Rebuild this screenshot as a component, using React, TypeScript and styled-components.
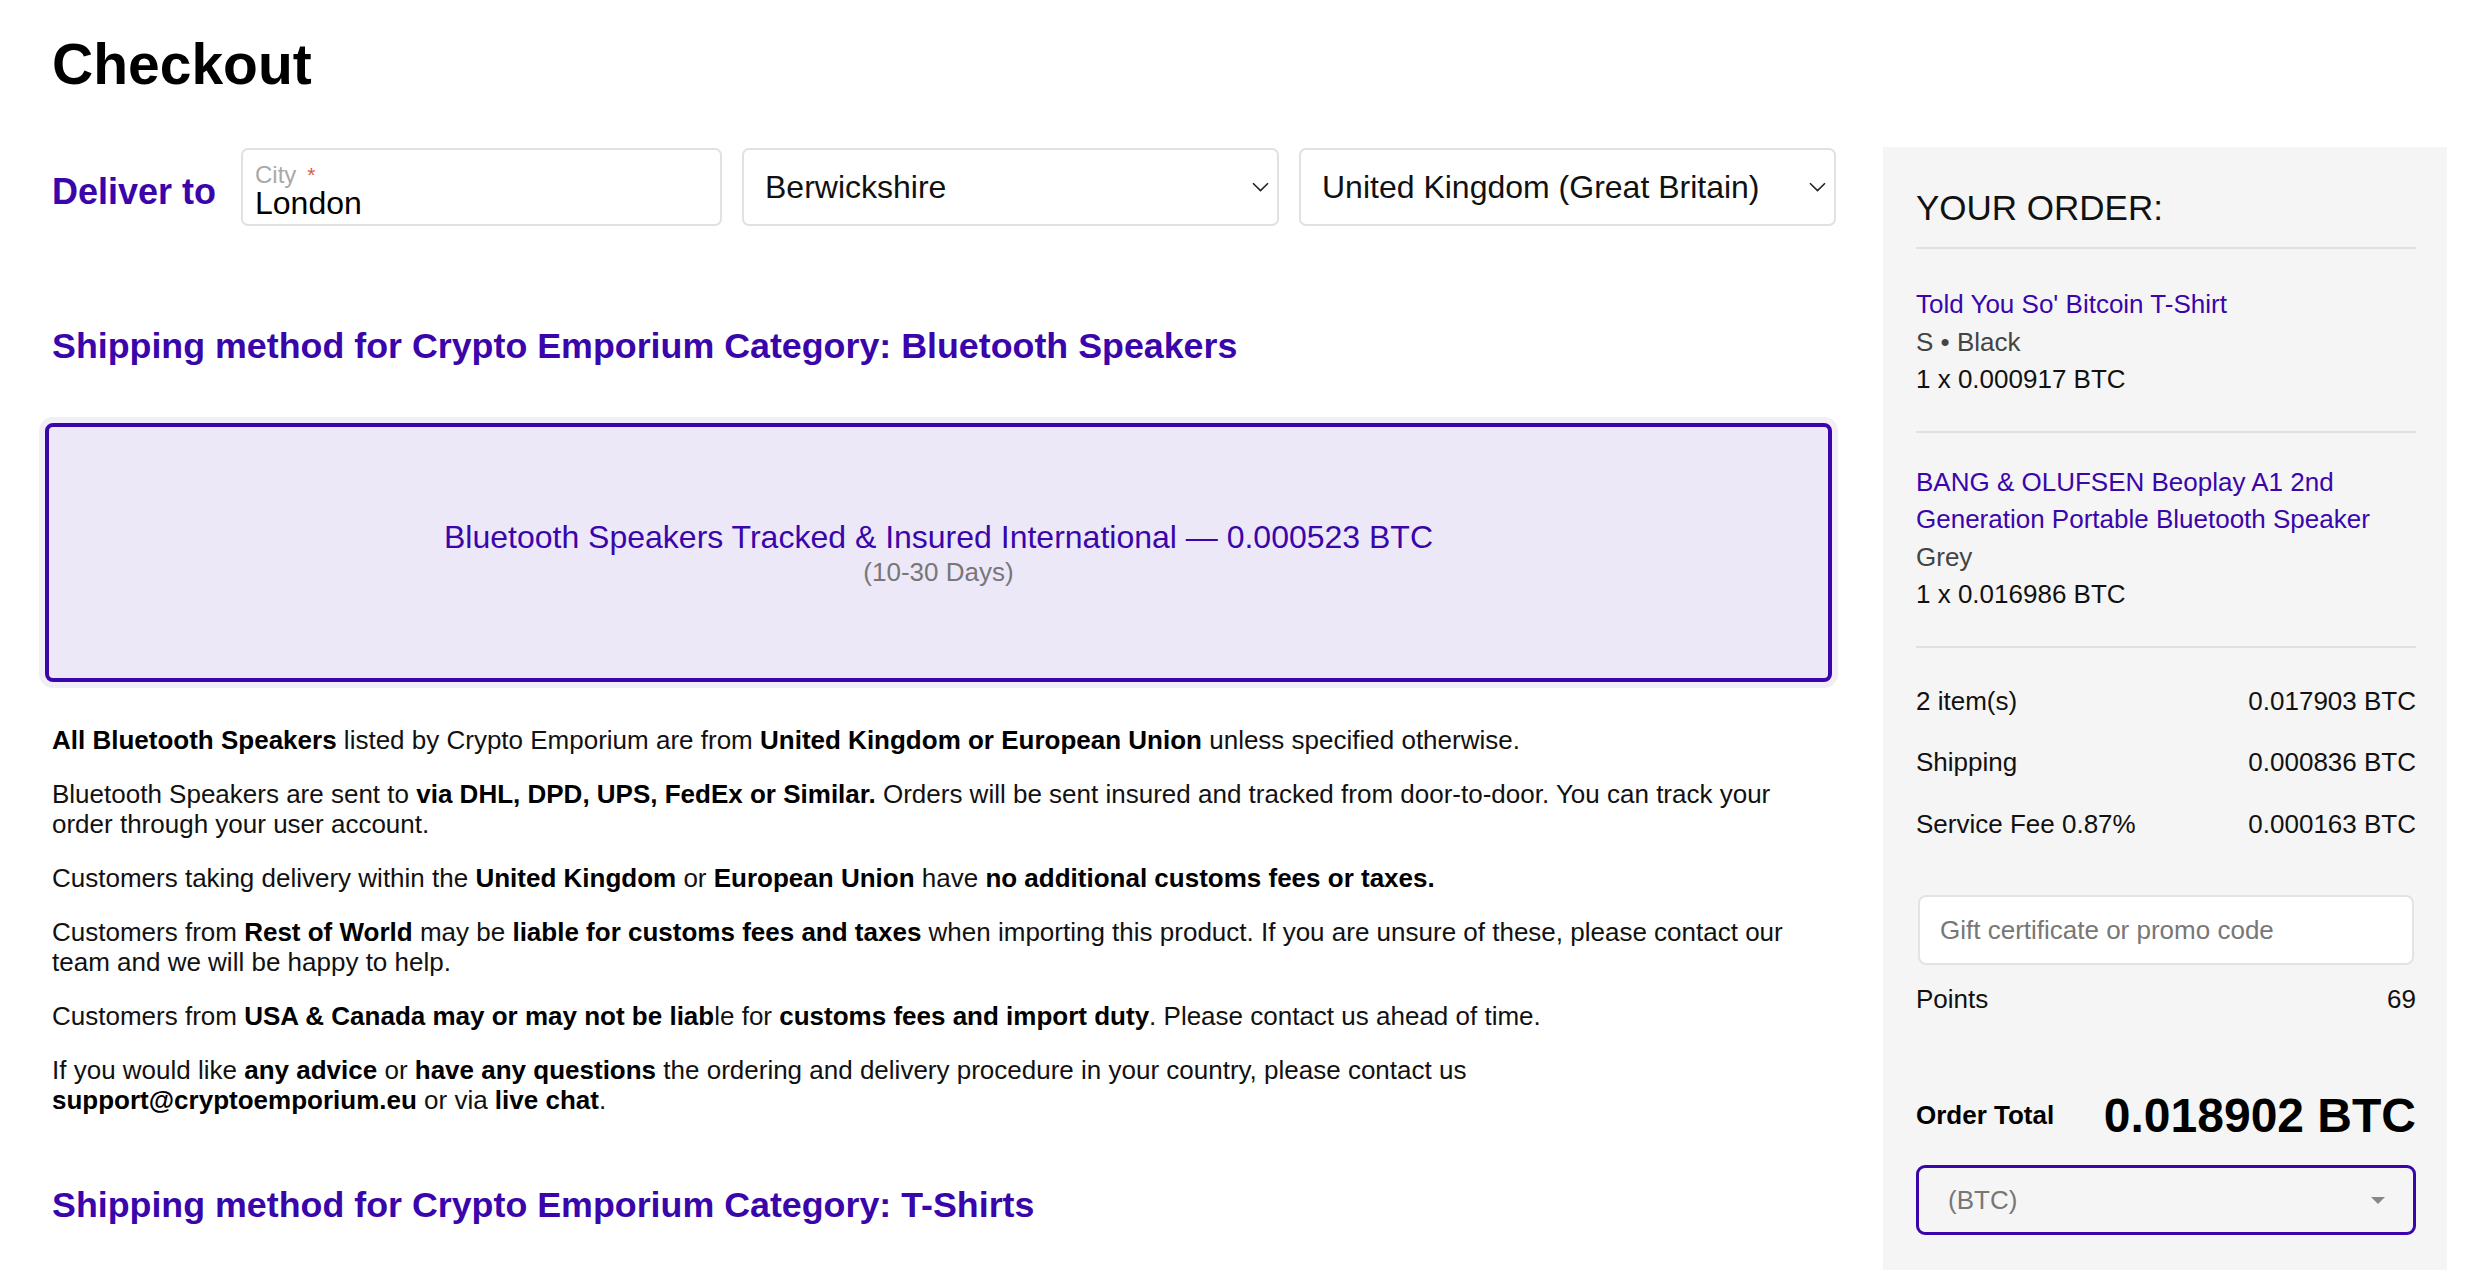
import React from "react";
import styled, { createGlobalStyle } from "styled-components";

const PURPLE = "#3a06ab";

const GlobalStyle = createGlobalStyle`
  html, body {
    margin: 0;
    padding: 0;
    background: #fff;
  }
  body {
    font-family: "Liberation Sans", Arial, sans-serif;
    color: #111;
  }
  * {
    box-sizing: border-box;
  }
`;

const Page = styled.div`
  width: 2484px;
  padding: 32px 37px 0 52px;
`;

const Title = styled.h1`
  margin: 0 0 51px;
  font-size: 57px;
  line-height: 64px;
  font-weight: 700;
  color: #000;
`;

const Layout = styled.div`
  display: grid;
  grid-template-columns: 1fr 564px;
  column-gap: 47px;
  align-items: start;
`;

const Main = styled.main`
  display: flex;
  flex-direction: column;
  padding-top: 1px;
`;

const DeliverRow = styled.div`
  display: flex;
  align-items: center;
  gap: 20px;
  height: 78px;
`;

const DeliverLabel = styled.div`
  flex: 0 0 169px;
  padding-top: 10px;
  font-size: 36px;
  font-weight: 700;
  color: ${PURPLE};
  white-space: nowrap;
`;

const Field = styled.div`
  height: 78px;
  border: 2px solid #e1e1e1;
  border-radius: 7px;
  background: #fff;
`;

const CityField = styled(Field)`
  flex: 0 0 481px;
  display: flex;
  flex-direction: column;
  padding: 12px 12px 0;
`;

const FloatLabel = styled.span`
  font-size: 24px;
  line-height: 25px;
  color: #a9a9a9;

  & em {
    font-style: normal;
    color: #e0554f;
    font-size: 21px;
    vertical-align: top;
    margin-left: 11px;
  }
`;

const FieldValue = styled.span`
  font-size: 32px;
  line-height: 32px;
  color: #000;
`;

const SelectBox = styled(Field)`
  flex: 1 1 0;
  display: flex;
  align-items: center;
  justify-content: space-between;
  padding: 0 8px 0 21px;
  font-size: 32px;
  color: #111;
`;

const SectionHeading = styled.h2<{ $top: number; $bottom: number }>`
  margin: ${(p) => p.$top}px 0 ${(p) => p.$bottom}px;
  font-size: 35.8px;
  line-height: 42px;
  font-weight: 700;
  color: ${PURPLE};
`;

const ShippingOption = styled.div`
  height: 259px;
  margin: 0 4px 43px -7px;
  border: 4px solid ${PURPLE};
  border-radius: 8px;
  background: #ede8f8;
  box-shadow: 0 0 0 6px #f1eef8;
  display: flex;
  flex-direction: column;
  align-items: center;
  justify-content: center;
  text-align: center;
`;

const OptionName = styled.div`
  font-size: 32px;
  line-height: 34px;
  color: ${PURPLE};
`;

const OptionDays = styled.div`
  margin-top: 4px;
  font-size: 26px;
  line-height: 28px;
  color: #777;
`;

const Info = styled.p`
  margin: 0 0 24px;
  max-width: 1750px;
  font-size: 26px;
  line-height: 30px;
  color: #111;

  & strong {
    font-weight: 700;
    color: #000;
  }
`;

const Aside = styled.aside`
  background: #f5f5f5;
  padding: 41px 31px 60px 33px;
  display: flex;
  flex-direction: column;
`;

const OrderTitle = styled.div`
  font-size: 35px;
  line-height: 40px;
  color: #111;
  padding-bottom: 19px;
  margin-bottom: 6px;
  border-bottom: 2px solid #e0e0e0;
`;

const OrderItem = styled.div`
  padding: 31px 0 32px;
  border-bottom: 2px solid #e0e0e0;
  font-size: 26px;
  line-height: 37.5px;
`;

const ItemName = styled.div`
  color: ${PURPLE};
`;

const ItemVariant = styled.div`
  color: #444;
`;

const ItemPrice = styled.div`
  color: #111;
`;

const Totals = styled.div`
  display: flex;
  flex-direction: column;
  gap: 24px;
  padding-top: 35px;
`;

const TotalRow = styled.div`
  display: flex;
  justify-content: space-between;
  font-size: 26px;
  line-height: 37.5px;
  color: #111;
`;

const PromoInput = styled.div`
  margin: 52px 2px 0;
  height: 70px;
  display: flex;
  align-items: center;
  padding-left: 20px;
  background: #fff;
  border: 2px solid #e3e3e3;
  border-radius: 8px;
  font-size: 26px;
  color: #777;
`;

const PointsRow = styled(TotalRow)`
  margin-top: 15.5px;
`;

const GrandTotal = styled.div`
  margin-top: 69px;
  height: 56px;
  display: flex;
  align-items: center;
  justify-content: space-between;
  color: #000;
`;

const GrandLabel = styled.span`
  font-size: 26px;
  font-weight: 700;
`;

const GrandValue = styled.span`
  font-size: 48px;
  font-weight: 700;
`;

const CurrencySelect = styled.div`
  margin-top: 22px;
  height: 70px;
  display: flex;
  align-items: center;
  justify-content: space-between;
  padding: 0 28px 0 29px;
  border: 3px solid ${PURPLE};
  border-radius: 9px;
  font-size: 26px;
  color: #777;
`;

const Caret = styled.span`
  width: 0;
  height: 0;
  border-left: 7.5px solid transparent;
  border-right: 7.5px solid transparent;
  border-top: 7px solid #888;
`;

const Chevron = () => (
  <svg width="17" height="10" viewBox="0 0 17 10" fill="none">
    <path d="M1 1.2 L8.5 8.6 L16 1.2" stroke="#222" strokeWidth="1.6" />
  </svg>
);

export default function App() {
  return (
    <Page>
      <GlobalStyle />
      <Title>Checkout</Title>
      <Layout>
        <Main>
          <DeliverRow>
            <DeliverLabel>Deliver to</DeliverLabel>
            <CityField>
              <FloatLabel>
                City<em>*</em>
              </FloatLabel>
              <FieldValue>London</FieldValue>
            </CityField>
            <SelectBox>
              <span>Berwickshire</span>
              <Chevron />
            </SelectBox>
            <SelectBox>
              <span>United Kingdom (Great Britain)</span>
              <Chevron />
            </SelectBox>
          </DeliverRow>

          <SectionHeading $top={99} $bottom={56}>
            Shipping method for Crypto Emporium Category: Bluetooth Speakers
          </SectionHeading>

          <ShippingOption>
            <OptionName>
              Bluetooth Speakers Tracked &amp; Insured International — 0.000523 BTC
            </OptionName>
            <OptionDays>(10-30 Days)</OptionDays>
          </ShippingOption>

          <Info>
            <strong>All Bluetooth Speakers</strong> listed by Crypto Emporium are from{" "}
            <strong>United Kingdom or European Union</strong> unless specified otherwise.
          </Info>
          <Info>
            Bluetooth Speakers are sent to <strong>via DHL, DPD, UPS, FedEx or Similar.</strong>{" "}
            Orders will be sent insured and tracked from door-to-door. You can track your order
            through your user account.
          </Info>
          <Info>
            Customers taking delivery within the <strong>United Kingdom</strong> or{" "}
            <strong>European Union</strong> have{" "}
            <strong>no additional customs fees or taxes.</strong>
          </Info>
          <Info>
            Customers from <strong>Rest of World</strong> may be{" "}
            <strong>liable for customs fees and taxes</strong> when importing this product. If you
            are unsure of these, please contact our team and we will be happy to help.
          </Info>
          <Info>
            Customers from <strong>USA &amp; Canada may or may not be liab</strong>le for{" "}
            <strong>customs fees and import duty</strong>. Please contact us ahead of time.
          </Info>
          <Info>
            If you would like <strong>any advice</strong> or <strong>have any questions</strong> the
            ordering and delivery procedure in your country, please contact us{" "}
            <strong>support@cryptoemporium.eu</strong> or via <strong>live chat</strong>.
          </Info>

          <SectionHeading $top={45} $bottom={40}>
            Shipping method for Crypto Emporium Category: T-Shirts
          </SectionHeading>
        </Main>

        <Aside>
          <OrderTitle>YOUR ORDER:</OrderTitle>
          <OrderItem>
            <ItemName>Told You So' Bitcoin T-Shirt</ItemName>
            <ItemVariant>S • Black</ItemVariant>
            <ItemPrice>1 x 0.000917 BTC</ItemPrice>
          </OrderItem>
          <OrderItem>
            <ItemName>BANG &amp; OLUFSEN Beoplay A1 2nd Generation Portable Bluetooth Speaker</ItemName>
            <ItemVariant>Grey</ItemVariant>
            <ItemPrice>1 x 0.016986 BTC</ItemPrice>
          </OrderItem>
          <Totals>
            <TotalRow>
              <span>2 item(s)</span>
              <span>0.017903 BTC</span>
            </TotalRow>
            <TotalRow>
              <span>Shipping</span>
              <span>0.000836 BTC</span>
            </TotalRow>
            <TotalRow>
              <span>Service Fee 0.87%</span>
              <span>0.000163 BTC</span>
            </TotalRow>
          </Totals>
          <PromoInput>Gift certificate or promo code</PromoInput>
          <PointsRow>
            <span>Points</span>
            <span>69</span>
          </PointsRow>
          <GrandTotal>
            <GrandLabel>Order Total</GrandLabel>
            <GrandValue>0.018902 BTC</GrandValue>
          </GrandTotal>
          <CurrencySelect>
            <span>(BTC)</span>
            <Caret />
          </CurrencySelect>
        </Aside>
      </Layout>
    </Page>
  );
}
